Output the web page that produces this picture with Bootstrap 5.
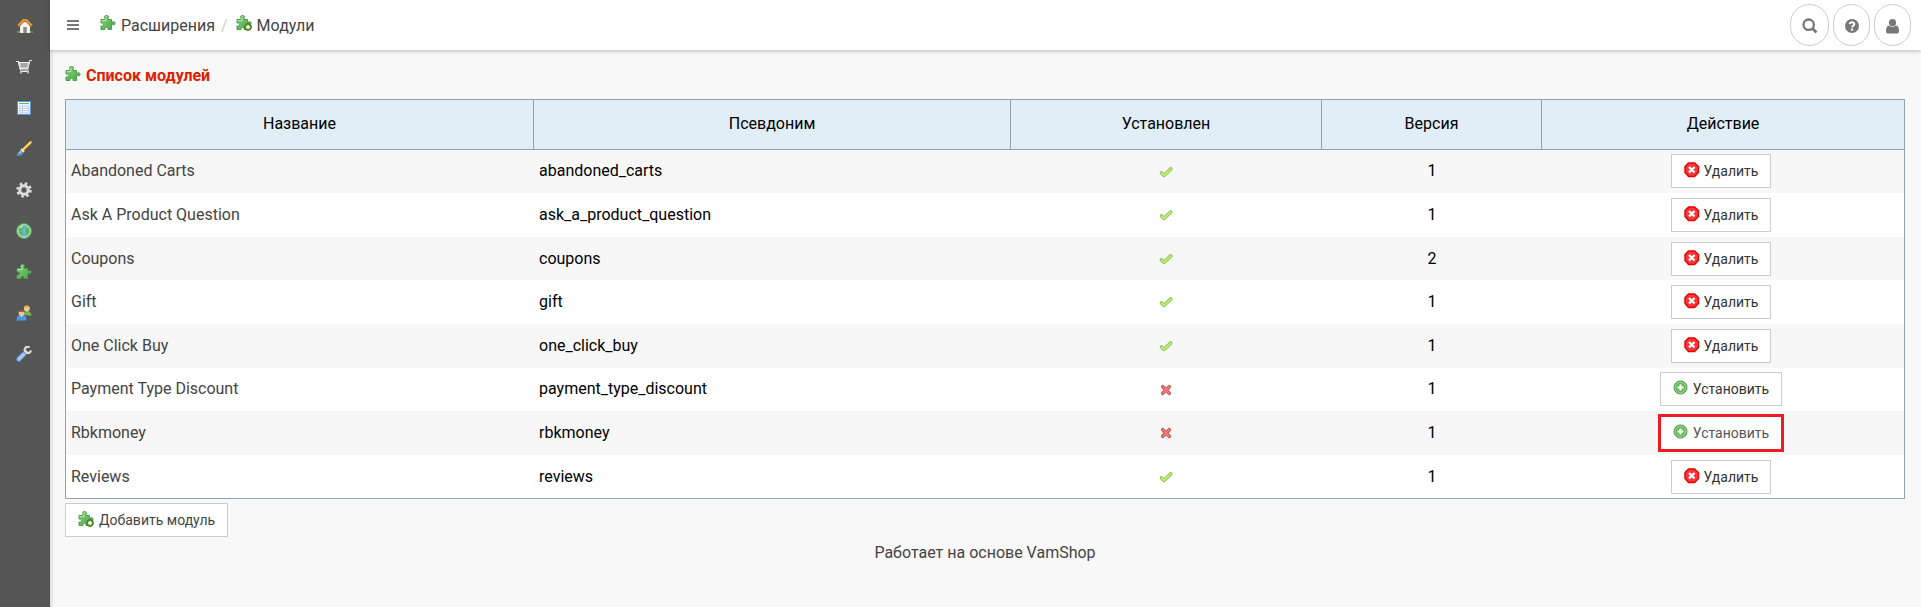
<!DOCTYPE html>
<html lang="ru">
<head>
<meta charset="utf-8">
<title>Модули</title>
<link href="https://cdn.jsdelivr.net/npm/bootstrap@5.3.0/dist/css/bootstrap.min.css" rel="stylesheet">
<style>
body{font:16px/24px Roboto,sans-serif;background:#f8f8f8;color:#444;height:607px;overflow:hidden}
.side{width:50px;height:607px;background:#555;padding-top:18px;padding-right:2px;gap:25px}
.side svg{width:16px;height:16px;flex:none}
.ic{width:16px;height:16px;flex:none}
.main{height:607px;box-shadow:inset 4px 0 4px -3px #ccc}
.topbar{height:50px;background:#fff;box-shadow:0 1px 4px rgba(0,0,0,.25);position:relative;padding-left:17px;padding-right:10px}
.burger{margin-right:21px}
.crumb{padding-top:1px}
.crumb .ic{margin-right:5px;margin-top:-5px}
.slash{color:#ccc;margin:0 8px 0 6px}
.round{width:37px;height:42px;border:1px solid #ccc;border-radius:21px;color:#777;background:#fff}
.content{padding:14px 16px 0 15px}
.ttl{font-size:16px;line-height:24px;color:#d20;font-weight:700;margin:0 0 11px}
.ttl .ic{margin:-5px 5px 0 0}
.mods{width:1840px;table-layout:fixed;border:1px solid #93a1ad;border-collapse:separate;border-spacing:0;color:#000}
.mods th{height:49.6px;font-weight:400;text-align:center;background:#e1eef7;border-right:1px solid #93a1ad;border-bottom:1px solid #93a1ad;padding:0}
.mods th:last-child{border-right:0}
.mods td{height:43.6px;padding:0 5px;background:#fff}
.mods tr:nth-child(odd) td{background:#f7f7f7}
.mods td:first-child{color:#444}
.mods td:nth-child(3){padding-right:7px}
.mods td:nth-child(3) .ic{margin-top:-1px}
.mods td:last-child{padding-right:9px}
.bt{height:34px;border:1px solid #ccc;border-radius:0;background:#fff;color:#333;font-size:14px;line-height:20px;padding:0 12px}
.bt:hover{background:#fff}
.bt .ic{margin-right:4px;margin-top:-2px}
.hot{outline:3px solid #ed1c24;outline-offset:-1px;color:#555;box-shadow:0 0 0 2px #ed1c24}
.add{margin-top:3.6px;color:#444}
.add .ic{margin-right:5px}
.foot{margin-top:4px}
</style>
</head>
<body>
<svg width="0" height="0" class="position-absolute">
<defs>
<linearGradient id="gg" x2="1" y2="1"><stop stop-color="#8fd586"/><stop offset="1" stop-color="#44a33f"/></linearGradient>
<symbol id="puz" viewBox="0 0 16 16"><path d="M1 4.500H5V3.200C4 1 5 .5 6.500.5S9 1 8 3.200V4.500h3.500V7h1.300c1.500-.8 2.200 0 2.200 1.300s-.7 2-2.200 1.200h-1.300v5H8v-1.500c-.5-1-2.500-1-3 0v1.500H1V11h1.500c1.300-.6 1.300-2.400 0-3H1z" fill="url(#gg)" stroke="#4c9f4c"/><path d="M2 5.500H6V3.500C5.600 2 6 1.500 6.500 1.500" fill="none" stroke="#b5e8ab"/></symbol>
<symbol id="puzadd" viewBox="0 0 16 16"><use href="#puz"/><circle cx="12" cy="12" r="3.400" fill="#6ba83c" stroke="#426e1f"/><path d="M12 10v4M10 12h4" stroke="#fff" stroke-width="1.300"/></symbol>
<symbol id="del" viewBox="0 0 16 16"><path d="M4.500 1h6L14.500 4.500v6L10.500 14.500h-6L1 10.500v-6z" fill="#f83838" stroke="#e60000" stroke-width="1.400"/><path d="M5 5l5.500 5.500M10.500 5L5 10.500" stroke="#fff" stroke-width="2.300"/></symbol>
<symbol id="ins" viewBox="0 0 16 16"><circle cx="7.500" cy="7.500" r="6.500" fill="#68b95c" stroke="#4b9448"/><circle cx="7.500" cy="7.500" r="5.400" fill="none" stroke="#b2dda8" stroke-width=".8"/><path d="M7.500 4.500v6M4.500 7.500h6" stroke="#fff" stroke-width="2"/></symbol>
<symbol id="yes" viewBox="0 0 16 16"><path d="M3.500 9l2.700 2.300L12.700 5" fill="none" stroke="#8cb356" stroke-width="3.600" stroke-linejoin="round" stroke-linecap="round"/><path d="M3.500 9l2.700 2.300L12.700 5" fill="none" stroke="#b8f36b" stroke-width="2" stroke-linecap="round"/></symbol>
<symbol id="no" viewBox="0 0 16 16"><path d="M4.700 4.700l6.600 6.600M11.300 4.700l-6.600 6.600" stroke="#bd4c4c" stroke-width="3.500" stroke-linecap="round"/><path d="M4.700 4.700l6.600 6.600M11.300 4.700l-6.600 6.600" stroke="#f27c7c" stroke-width="1.900" stroke-linecap="round"/></symbol>
</defs></svg>
<div class="d-flex">
<nav class="side d-flex flex-column align-items-center flex-shrink-0">
<svg viewBox="0 0 16 16" style="margin-left:2px"><path d="M0 13h5v2H0zM11 13h5v2h-5z" fill="#45a53c"/><path d="M3 7l5-4 5 4v8H3z" fill="#f2f2ee"/><path d="M6.300 9h3.500v6H6.300z" fill="#8a8a8a"/><path d="M1 8.200L6.300 2.200h3.400L15 8.200" fill="none" stroke="#a8601c" stroke-width="3"/><path d="M1.400 7.500L6.500 2h3l5 5.500" fill="none" stroke="#e6a653" stroke-width="1.700"/></svg>
<svg viewBox="0 0 16 16"><path d="M0 2.500h2.500l2 8.500h8.500" fill="none" stroke="#eee" stroke-width="1.200"/><path d="M2.500 3.500h11L12 9.500H4z" fill="#ddd" stroke="#eee"/><path d="M4 5h8.500M4 7h8.500M6 4v5M8 4v5M10 4v5" stroke="#777" stroke-width=".6"/><path d="M13 4l.7-2.500h2.300M4 12.500h9" stroke="#eee" fill="none"/><circle cx="5" cy="13.500" r="1.200" fill="#aaa"/><circle cx="12" cy="13.500" r="1.200" fill="#aaa"/></svg>
<svg viewBox="0 0 16 16"><path d="M1.500 1.500h13v13h-13z" fill="#fff" stroke="#5f93dc"/><path d="M3 3.500h10" stroke="#72b267" stroke-width="1.300"/><path d="M3 6h10M3 8.300h10M3 10.600h10M3 12.900h10M3.200 5.500v8M6.500 5.500v8M12.800 5.500v8" stroke="#a8c5ee" stroke-width=".9"/></svg>
<svg viewBox="0 0 16 16"><path d="M6 10L15 1" stroke="#c88a1c" stroke-width="3" stroke-linecap="round"/><path d="M6.500 9L15 .8" stroke="#ffe078" stroke-width="1.700"/><path d="M5 8l3 3" stroke="#e6e6e6" stroke-width="2"/><path d="M0 14.500c2-.5 2-5 4.500-5l2.500 2.500c-.5 3-4 3-7 2.500z" fill="#6597c8"/><path d="M3 12l2-1.500" stroke="#d7e9f8"/></svg>
<svg viewBox="0 0 16 16"><circle cx="8" cy="8" r="6.500" fill="none" stroke="#ddd" stroke-width="2.500" stroke-dasharray="2.550 2.550"/><circle cx="8" cy="8" r="4.200" fill="none" stroke="#ddd" stroke-width="3"/><circle cx="8" cy="8" r="2.700" fill="#555" stroke="#aaa" stroke-width=".6"/></svg>
<svg viewBox="0 0 16 16"><circle cx="8" cy="8" r="7.200" fill="#67b6d9" stroke="#53ab48" stroke-width="1.400"/><circle cx="8" cy="8" r="6.300" fill="none" stroke="#c9edc4"/><path d="M2.500 6l3-3 3 .5L7 6.500 5 8l2 2-1 3-2-2.500zM10 5l3 .5.500 4-2.500 3-1.500-3z" fill="#64b648"/><path d="M4 5l3-2" stroke="#def4ff"/></svg>
<svg><use href="#puz"/></svg>
<svg viewBox="0 0 16 16"><path d="M7 10c0-3 1.500-4 4-4s4.500 1.500 4.500 5z" fill="#67b550"/><circle cx="10.800" cy="3.500" r="2.900" fill="#f6c796"/><path d="M7.800 3c0-3.500 6-3.500 6 0l-1-.7H9z" fill="#eda91d"/><path d="M.5 15.500c0-4 1.500-5.500 5-5.500s5 1.500 5 5.500z" fill="#4e99e7"/><circle cx="5.500" cy="8" r="2.900" fill="#f4c193"/><path d="M2.500 8c0-4.500 6-4.500 6 0l-1-1.200h-4z" fill="#8c4b26"/><path d="M4.500 10.500h2L5.500 12z" fill="#fff"/></svg>
<svg viewBox="0 0 16 16"><path d="M8 8l3-3" stroke="#ddd" stroke-width="3"/><path d="M13.500 1.200A3.200 3.200 0 1 0 15 4.500" fill="none" stroke="#ddd" stroke-width="2.200"/><path d="M2.800 13.200L7.500 8.500" stroke="#5e8fd8" stroke-width="5" stroke-linecap="round"/><path d="M2.800 13.200L7.500 8.500" stroke="#a8c9f4" stroke-width="3.200" stroke-linecap="round"/></svg>
</nav>
<main class="main flex-grow-1">
<header class="topbar d-flex align-items-center">
<svg width="12" height="12" class="burger flex-shrink-0 d-block"><path d="M0 2h12M0 6h12M0 10h12" stroke="#777" stroke-width="2"/></svg>
<div class="crumb d-flex align-items-center"><svg class="ic"><use href="#puz"/></svg>Расширения<span class="slash">/</span><svg class="ic"><use href="#puzadd"/></svg>Модули</div>
<div class="d-flex ms-auto" style="gap:4px">
<span class="round d-flex align-items-center justify-content-center" style="width:39px"><svg width="16" height="16" style="margin-top:2px"><circle cx="6.700" cy="6.700" r="5.200" fill="none" stroke="currentColor" stroke-width="2.300"/><path d="M10.500 10.500l4 4" stroke="currentColor" stroke-width="2.600"/></svg></span>
<span class="round d-flex align-items-center justify-content-center"><svg width="14" height="14" viewBox="0 0 14 14" style="margin-top:2px"><circle cx="7" cy="7" r="7" fill="currentColor"/><path d="M4.700 5.200C5 2.600 9.400 2.700 9.300 5.200c0 1.500-2.200 1.500-2.200 3.200" fill="none" stroke="#fff" stroke-width="1.900"/><path d="M6 9.600h2.200v2H6z" fill="#fff"/></svg></span>
<span class="round d-flex align-items-center justify-content-center"><svg width="13" height="15" viewBox="0 0 13 15" style="margin-top:2px"><circle cx="6.500" cy="3.700" r="3.600" fill="currentColor"/><path d="M3 6.500c-2 .3-3 2-3 5.500C0 14 1 14.500 2.500 14.500h8c1.500 0 2.500-.5 2.500-2.500 0-3.500-1-5.200-3-5.500-2 1.800-5 1.800-7 0z" fill="currentColor"/></svg></span>
</div>
</header>
<div class="content">
<h1 class="ttl d-flex align-items-center"><svg class="ic"><use href="#puz"/></svg>Список модулей</h1>
<table class="mods">
<colgroup><col style="width:468px"><col style="width:477px"><col style="width:311px"><col style="width:220px"><col></colgroup>
<thead><tr><th>Название</th><th>Псевдоним</th><th>Установлен</th><th>Версия</th><th>Действие</th></tr></thead>
<tbody id="rows"></tbody>
</table>
<button class="btn bt add d-inline-flex align-items-center"><svg class="ic"><use href="#puzadd"/></svg>Добавить модуль</button>
<div class="text-center foot">Работает на основе VamShop</div>
</div>
</main>
</div>
<script>
const mods=[['Abandoned Carts','abandoned_carts',1,1],['Ask A Product Question','ask_a_product_question',1,1],['Coupons','coupons',1,2],['Gift','gift',1,1],['One Click Buy','one_click_buy',1,1],['Payment Type Discount','payment_type_discount',0,1],['Rbkmoney','rbkmoney',0,1],['Reviews','reviews',1,1]];
document.getElementById('rows').innerHTML=mods.map(m=>`<tr><td>${m[0]}</td><td>${m[1]}</td><td class="text-center"><svg class="ic"><use href="#${m[2]?'yes':'no'}"/></svg></td><td class="text-center">${m[3]}</td><td class="text-center"><span class="btn bt d-inline-flex align-items-center align-middle ${m[0]==='Rbkmoney'?'hot':''}"><svg class="ic"><use href="#${m[2]?'del':'ins'}"/></svg>${m[2]?'Удалить':'Установить'}</span></td></tr>`).join('');
</script>
<script src="https://cdn.jsdelivr.net/npm/bootstrap@5.3.0/dist/js/bootstrap.bundle.min.js"></script>
</body>
</html>
